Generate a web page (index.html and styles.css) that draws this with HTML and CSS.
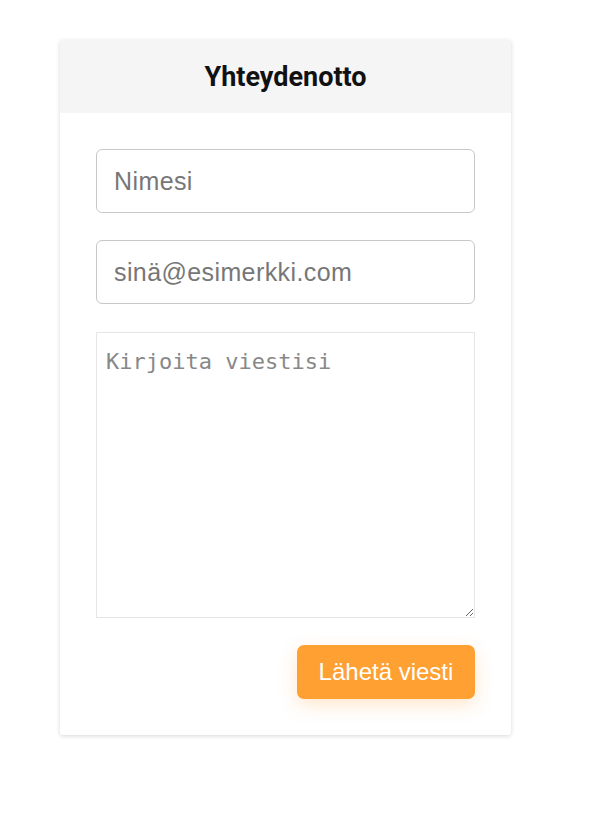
FILE: index.html
```html
<!DOCTYPE html>
<html lang="fi">
<head>
    <meta charset="UTF-8">
    <meta name="viewport" content="width=device-width, initial-scale=1.0">
    <title>Yhteydenotto</title>
    <link rel="stylesheet" href="styles.css">
</head>
<body>
    <div class="contact-card">
        <div class="card-header">Yhteydenotto</div>
        <form class="contact-form" onsubmit="return false">
            <input type="text" class="field" placeholder="Nimesi">
            <input type="email" class="field" placeholder="sinä@esimerkki.com">
            <textarea class="message" placeholder="Kirjoita viestisi"></textarea>
            <div class="form-actions">
                <button type="submit" class="send-btn">Lähetä viesti</button>
            </div>
        </form>
    </div>
</body>
</html>
```

FILE: styles.css
```css
:root {
    --accent: #ffa033;
    --header-bg: #f5f5f5;
    --border: #c8c8c8;
    --border-light: #e6e6e6;
    --placeholder: #777;
}

* {
    margin: 0;
    padding: 0;
    box-sizing: border-box;
}

body {
    background: #fff;
    font-family: 'Liberation Sans', Arial, sans-serif;
    padding: 40px 0 40px 60px;
}

.contact-card {
    width: 451px;
    background: #fff;
    border-radius: 3px;
    box-shadow: 0 1px 4px rgba(0, 0, 0, 0.16);
    overflow: hidden;
}

.card-header {
    background: var(--header-bg);
    height: 73px;
    display: flex;
    align-items: center;
    justify-content: center;
    font-family: Roboto, sans-serif;
    font-weight: 700;
    font-size: 27px;
    color: #111;
}

.contact-form {
    display: flex;
    flex-direction: column;
    gap: 27px;
    padding: 36px 36px 36px 36px;
}

.field {
    width: 379px;
    height: 64px;
    padding: 0 17px;
    border: 1px solid var(--border);
    border-radius: 6px;
    font-family: 'Liberation Sans', Arial, sans-serif;
    font-size: 25px;
    letter-spacing: 0.4px;
    color: #333;
}

.field::placeholder {
    color: var(--placeholder);
}

.message {
    width: 379px;
    height: 286px;
    margin-top: 1px;
    padding: 16px 9px;
    border: 1px solid var(--border-light);
    font-family: 'DejaVu Sans Mono', monospace;
    font-size: 22px;
    color: #333;
    resize: both;
}

.message::placeholder {
    color: #888;
}

.form-actions {
    display: flex;
    justify-content: flex-end;
    width: 379px;
}

.send-btn {
    width: 178px;
    height: 54px;
    background: var(--accent);
    color: #fff;
    border: none;
    border-radius: 7px;
    font-family: 'Liberation Sans', Arial, sans-serif;
    font-size: 24px;
    box-shadow: 0 6px 18px rgba(255, 160, 51, 0.25);
    cursor: pointer;
}
```
